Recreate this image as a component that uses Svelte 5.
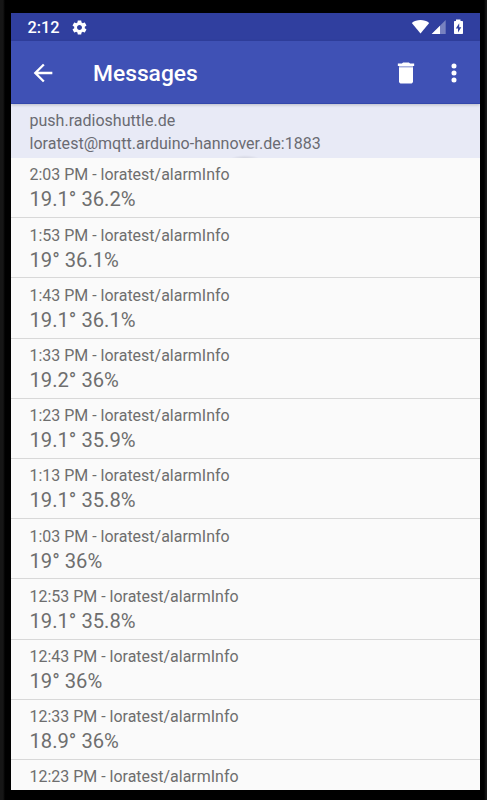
<script>
  const messages = [
    ['2:03 PM', '19.1° 36.2%'],
    ['1:53 PM', '19° 36.1%'],
    ['1:43 PM', '19.1° 36.1%'],
    ['1:33 PM', '19.2° 36%'],
    ['1:23 PM', '19.1° 35.9%'],
    ['1:13 PM', '19.1° 35.8%'],
    ['1:03 PM', '19° 36%'],
    ['12:53 PM', '19.1° 35.8%'],
    ['12:43 PM', '19° 36%'],
    ['12:33 PM', '18.9° 36%'],
    ['12:23 PM', '']
  ];
</script>

<div class="device">
  <main class="screen">
    <div class="status">
      <span class="clock">2:12</span>
      <svg class="gear" width="17" height="17" viewBox="0 0 24 24"><path fill="#fff" d="M19.43 12.98c.04-.32.07-.64.07-.98s-.03-.66-.07-.98l2.11-1.65c.19-.15.24-.42.12-.64l-2-3.46c-.12-.22-.39-.3-.61-.22l-2.49 1c-.52-.4-1.08-.73-1.69-.98l-.38-2.65C14.46 2.18 14.25 2 14 2h-4c-.25 0-.46.18-.49.42l-.38 2.65c-.61.25-1.17.59-1.69.98l-2.49-1c-.23-.09-.49 0-.61.22l-2 3.46c-.13.22-.07.49.12.64l2.11 1.65c-.04.32-.07.65-.07.98s.03.66.07.98l-2.11 1.65c-.19.15-.24.42-.12.64l2 3.46c.12.22.39.3.61.22l2.49-1c.52.4 1.08.73 1.69.98l.38 2.65c.03.24.24.42.49.42h4c.25 0 .46-.18.49-.42l.38-2.65c.61-.25 1.17-.59 1.69-.98l2.49 1c.23.09.49 0 .61-.22l2-3.46c.12-.22.07-.49-.12-.64l-2.11-1.65zM12 15.5c-1.93 0-3.5-1.57-3.5-3.5s1.570-3.500 3.500-3.500 3.500 1.570 3.500 3.500-1.570 3.500-3.500 3.500z"/></svg>
      <svg class="signals" width="56" height="16" viewBox="0 0 56 16">
        <path fill="#fff" d="M.8 3.900C5.800.1 13.200.1 18.200 3.900L9.500 14.500z"/>
        <path fill="#fff" fill-opacity=".35" d="M34.700 1v14H20.700z"/>
        <path fill="#fff" d="M29 6.700V15h-8.300z"/>
        <path fill="#fff" d="M45 .5h4.500v1.400h1.700q.8 0 .8.800v11.500q0 .8-.8.800h-7.400q-.8 0-.8-.8v-11.500q0-.8.800-.8H45z"/>
        <path fill="#303f9f" d="M48.200 4.300 44.800 9.500h2.200v4l3.300-5.300h-2.100z"/>
      </svg>
    </div>
    <header class="appbar">
      <svg class="back" width="28" height="28" viewBox="0 0 24 24"><path fill="#fff" d="M20 11H7.830l5.590-5.590L12 4l-8 8 8 8 1.410-1.410L7.830 13H20z"/></svg>
      <h1>Messages</h1>
      <svg class="trash" width="28" height="28" viewBox="0 0 24 24"><path fill="#fff" d="M6 19c0 1.100.9 2 2 2h8c1.100 0 2-.9 2-2V7H6z"/><path fill="#fff" fill-opacity=".55" d="M6 6h12v1H6z"/><path fill="#fff" d="M19 3.800h-3.500l-1-.8h-5l-1 .8H5V6h14z"/></svg>
      <svg class="more" width="28" height="28" viewBox="0 0 24 24"><g fill="#fff"><circle cx="12" cy="6" r="2.150"/><circle cx="12" cy="12" r="2.150"/><circle cx="12" cy="18" r="2.150"/></g></svg>
    </header>
    <section class="server">
      <div>push.radioshuttle.de</div>
      <div>loratest@mqtt.arduino-hannover.de:1883</div>
      <i class="refresh"></i>
    </section>
    <ul>
      {#each messages as [time, value]}
        <li class:partial={!value}>
          <div class="topic">{time} - loratest/alarmInfo</div>
          {#if value}<div class="value">{value}</div>{/if}
        </li>
      {/each}
    </ul>
  </main>
</div>

<style>
  .device {
    box-sizing: border-box;
    width: 487px;
    height: 800px;
    padding: 13px 7.500px 10px 11px;
    background: linear-gradient(90deg, #161616 0 3px, #000 5px 484px, #161616 486px);
    font-family: Roboto, sans-serif;
    overflow: hidden;
  }
  .screen {
    display: flex;
    flex-direction: column;
    height: 100%;
    background: #fafafa;
    overflow: hidden;
  }
  .status {
    flex: none;
    height: 28px;
    display: flex;
    align-items: center;
    padding: 0 15px 0 16.500px;
    background: #303f9f;
    color: #fff;
  }
  .clock {
    font-size: 16.300px;
    font-weight: 500;
    width: 43px;
    padding-top: 1px;
  }
  .signals {
    margin-left: auto;
    margin-right: -2px;
  }
  .appbar {
    flex: none;
    box-sizing: border-box;
    height: 63px;
    display: flex;
    align-items: center;
    padding-top: 1px;
    background: #3f51b5;
    border-bottom: 1px solid #3347ab;
    box-shadow: 0 1px 3px #0003;
    position: relative;
    z-index: 1;
    color: #fff;
  }
  .back { margin-left: 18px; }
  h1 {
    margin: 2px 0 0 36px;
    font-size: 22.800px;
    font-weight: 500;
    line-height: 28px;
  }
  .trash { margin-left: auto; }
  .more { margin: 0 11.500px 0 20px; }
  .server {
    flex: none;
    box-sizing: border-box;
    height: 54px;
    padding: 6px 0 0 18.500px;
    background: #e8eaf6;
    color: #6a6b72;
    font-size: 16.050px;
    line-height: 22.500px;
    position: relative;
    overflow: hidden;
  }
  .refresh {
    position: absolute;
    left: 219px;
    top: 51px;
    width: 30px;
    height: 8px;
    border-radius: 50%;
    background: radial-gradient(closest-side, #0000001c, #0000);
  }
  ul {
    margin: 0;
    padding: 0;
    list-style: none;
  }
  li {
    box-sizing: border-box;
    height: 60.200px;
    padding: 6.400px 0 0 18.500px;
    border-bottom: 1px solid #d8d8d8;
    color: #6e6e6e;
  }
  .partial {
    height: 30px;
    border: 0;
  }
  .topic {
    font-size: 15.980px;
    line-height: 22px;
  }
  .value {
    font-size: 20.200px;
    line-height: 27px;
  }
</style>
